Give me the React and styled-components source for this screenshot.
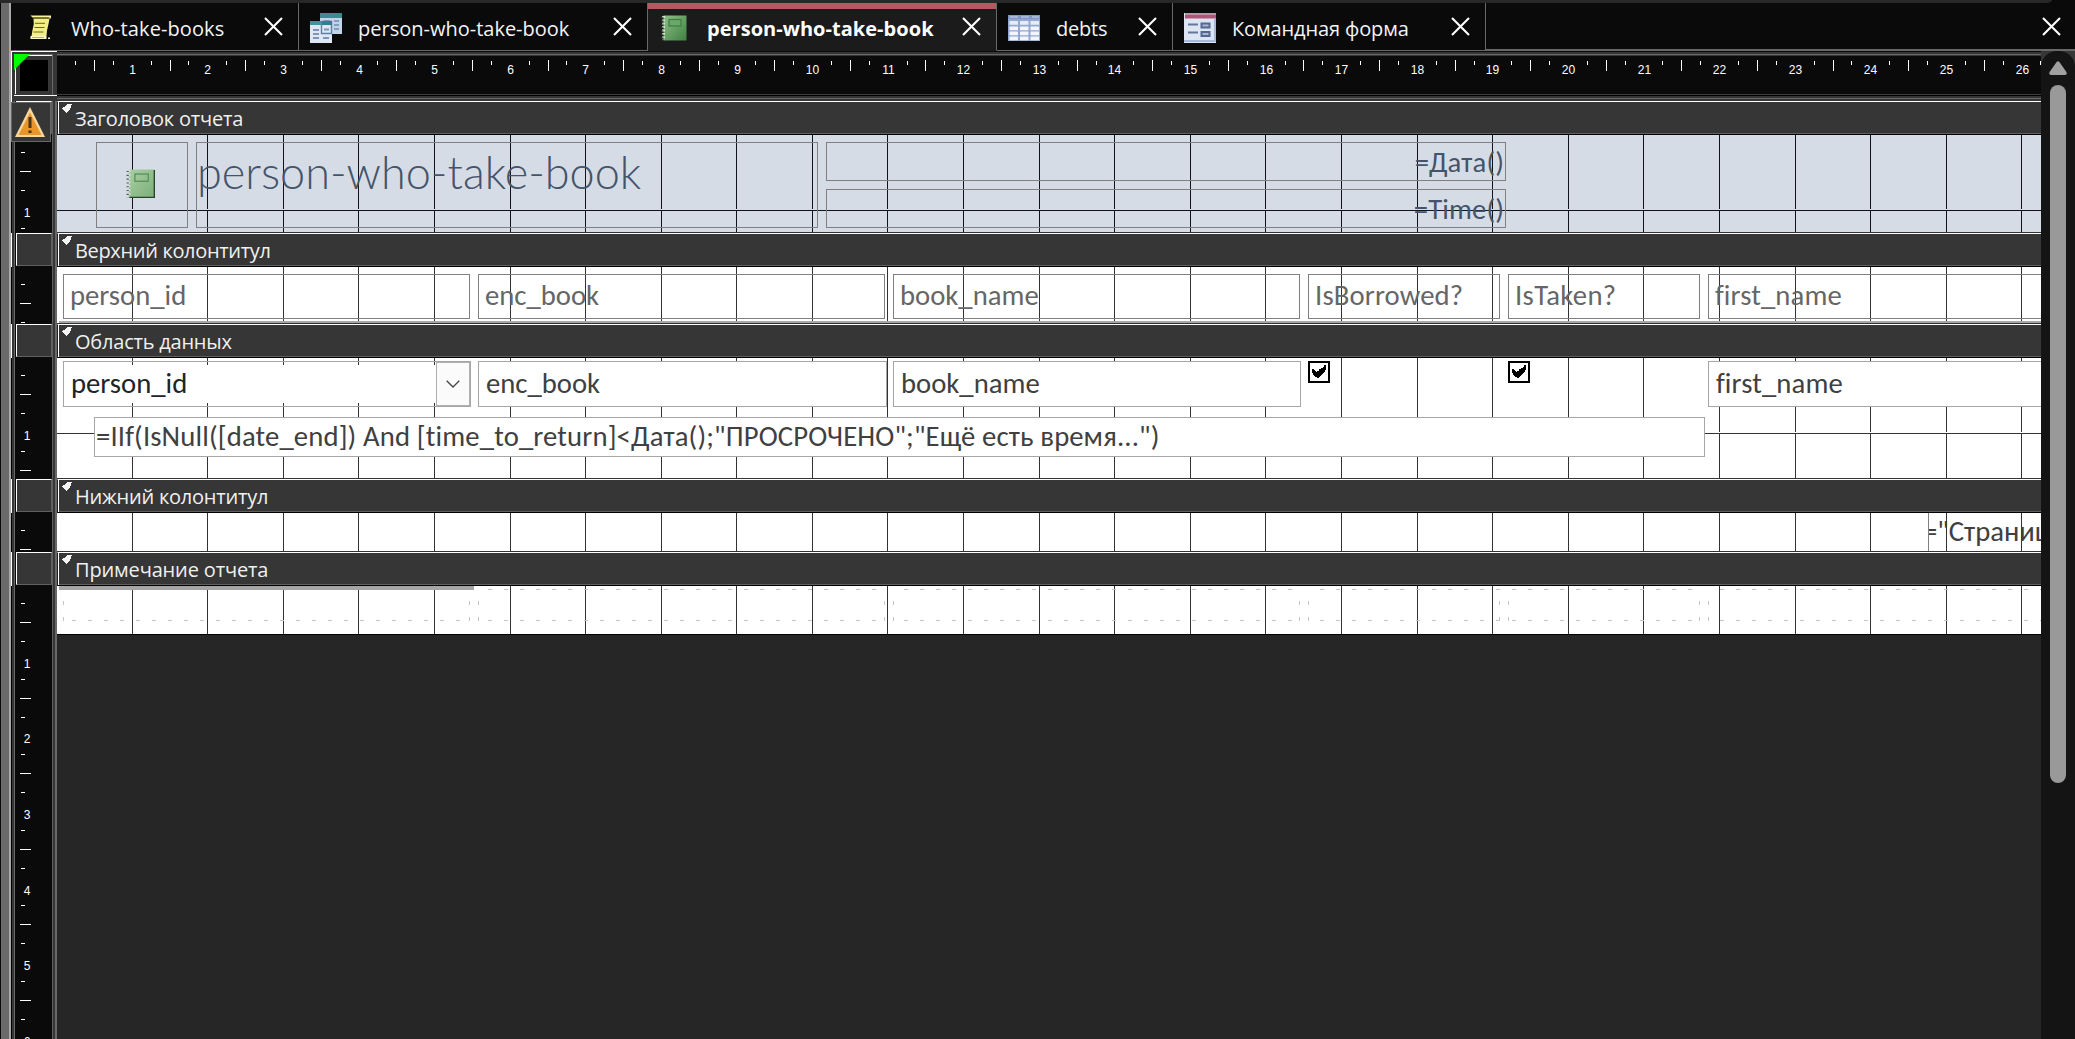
import React from "react";
import styled, { createGlobalStyle, css } from "styled-components";

const CM = 75.59;
const GRID_START = -0.53;
const CANVAS_WIDTH = 1984;

const ui = `"Segoe UI", "Open Sans", "Noto Sans", sans-serif`;
const body = `Calibri, Carlito, Lato, sans-serif`;

const GlobalStyle = createGlobalStyle`
  * { box-sizing: border-box; }
  body { margin: 0; background: #0a0a0a; overflow: hidden; font-variant-ligatures: none; }
`;

/* ---------- window frame ---------- */

const Window = styled.div`
  width: 2075px;
  height: 1039px;
  display: flex;
  flex-direction: column;
  background: #0a0a0a;
  font-family: ${ui};
  overflow: hidden;
`;

const TopStrip = styled.div`
  flex: 0 0 3px;
  width: 2052px;
  background: #282828;
  border-bottom-right-radius: 6px 3px;
`;

const Frame = styled.div`
  flex: 1;
  min-height: 0;
  display: flex;
`;

const LeftEdge = styled.div`
  flex: 0 0 11px;
  background: linear-gradient(90deg, #0a0a0a 1px, #6a6a6a 1px 9px, #a9a9a9 9px);
`;

const Main = styled.div`
  flex: 1;
  min-width: 0;
  display: flex;
  flex-direction: column;
`;

/* ---------- document tabs ---------- */

const TabBar = styled.div`
  flex: 0 0 48px;
  display: flex;
`;

const Tab = styled.div`
  width: ${(p) => p.$width}px;
  display: flex;
  align-items: center;
  padding: 3px 13px 0 ${(p) => p.$pad}px;
  border-right: 1px solid #686868;
  border-bottom: 1px solid #686868;
  color: #f4f4f4;
  font-size: 20px;
  white-space: nowrap;
  ${(p) =>
    p.$active &&
    css`
      background: #1b1b1b;
      border-bottom-color: #1b1b1b;
      box-shadow: inset 0 6px 0 #b65862;
      font-weight: 700;
      color: #fff;
    `}
`;

const TabIcon = styled.span`
  display: flex;
  flex: 0 0 32px;
  margin-right: ${(p) => p.$gap}px;
  margin-top: -1px;
`;

const TabLabel = styled.span`
  flex: 1;
  line-height: 27px;
  letter-spacing: ${(p) => p.$tracking || 0}px;
`;

const CloseButton = styled.button`
  width: 24px;
  height: 24px;
  padding: 0;
  margin-top: -3px;
  border: 0;
  background: none;
  color: #fff;
  display: grid;
  place-items: center;
`;

const TabBarRest = styled.div`
  flex: 1;
  display: flex;
  align-items: center;
  justify-content: flex-end;
  padding: 3px 12px 0 0;
  border-bottom: 2px solid #686868;
`;

/* ---------- designer ---------- */

const Workspace = styled.div`
  flex: 1;
  min-height: 0;
  display: flex;
`;

const Designer = styled.div`
  flex: 0 0 2030px;
  display: flex;
  flex-direction: column;
  overflow: hidden;
`;

const RulerRow = styled.div`
  flex: 0 0 50px;
  display: flex;
`;

const Corner = styled.div`
  flex: 0 0 46px;
  display: flex;
  flex-direction: column;
  border-top: 1px solid #fff;
  border-left: 1px solid #fff;
  padding: 2px 0 0 2px;
  background: #363636;
`;

const CornerButton = styled.div`
  width: 39px;
  height: 41px;
  border-top: 1px solid #686868;
  border-right: 1px solid #686868;
  position: relative;
  padding: 0 0 0 1px;
`;

const CornerInner = styled.div`
  width: 37px;
  height: 39px;
  border-top: 1px solid #fff;
  border-left: 1px solid #fff;
  display: grid;
  place-items: center;
`;

const CornerSquare = styled.div`
  width: 28px;
  height: 31px;
  background: #000;
`;

const CornerFlag = styled.div`
  position: absolute;
  left: 0;
  top: -1px;
  width: 16px;
  height: 16px;
  background: #00ff00;
  clip-path: polygon(0 0, 100% 0, 0 100%);
`;

const CornerBase = styled.div`
  height: 1px;
  background: #fff;
`;

const HorizontalRuler = styled.div`
  flex: 1;
  padding-top: 5px;
  background: linear-gradient(
    180deg,
    #0a0a0a 1px,
    #363636 1px 3px,
    #686868 3px 4px,
    #363636 4px 5px,
    #0a0a0a 5px 43px,
    #3c3c3c 43px 44px,
    #000 44px 45px,
    #363636 45px 47px,
    #686868 47px 48px,
    #363636 48px
  );
`;

const RulerSvg = styled.svg`
  display: block;
  fill: #fff;
  font-family: "Liberation Sans", Arial, sans-serif;
  font-size: 12px;
`;

const Section = styled.section`
  display: flex;
  ${(p) =>
    p.$fill &&
    css`
      flex: 1;
      min-height: 0;
    `}
`;

const Gutter = styled.div`
  flex: 0 0 46px;
  display: flex;
  flex-direction: column;
  overflow: hidden;
  background: linear-gradient(
    90deg,
    #000 1px,
    #363636 1px 3px,
    #686868 3px 4px,
    #0a0a0a 4px 41px,
    #606060 41px 42px,
    #363636 42px 44px,
    #686868 44px
  );
`;

const SelectorRow = styled.div`
  flex: 0 0 34px;
  width: 42px;
  border-left: 1px solid #fff;
  padding-left: 4px;
  position: relative;
`;

const Selector = styled.div`
  width: 36px;
  height: 33px;
  background: #363636;
  border: 1px solid #fff;
  border-right-color: #606060;
  border-bottom-color: #606060;
`;

const WarningButton = styled.div`
  position: absolute;
  z-index: 2;
  left: -1px;
  top: 1px;
  width: 40px;
  height: 40px;
  border: 1px solid #686868;
  background: #363636;
  display: flex;
  align-items: center;
  padding-left: 2px;
`;

const SectionBody = styled.div`
  flex: 1;
  min-width: 0;
  display: flex;
  flex-direction: column;
  background: #262626;
`;

const SectionHeader = styled.div`
  flex: 0 0 34px;
  height: 34px;
  min-height: 0;
  display: flex;
  align-items: flex-start;
  background: #363636;
  border-top: 1px solid #fff;
  border-bottom: 1px solid #000;
  border-left: 1px solid #202020;
  box-shadow: inset 1px 0 0 #fff, inset 0 -1px 0 #606060;
  padding-left: 4px;
  color: #f0f0f0;
  font-size: 20px;
`;

const SectionTitle = styled.span`
  margin: 3px 0 0 2px;
  line-height: 28px;
  letter-spacing: ${(p) => p.$tracking}px;
`;

const Canvas = styled.div`
  position: relative;
  flex: 0 0 ${(p) => p.$height}px;
  overflow: hidden;
  background: ${(p) => p.$fill || "#fff"};
  border-bottom: 1px solid ${(p) => p.$edge || "#333"};
`;

const GridSvg = styled.svg`
  display: block;
  position: absolute;
  inset: 0;
`;

/* ---------- report controls placed freely on the canvas ---------- */

const Control = styled.div`
  position: absolute;
  left: ${(p) => p.$x}px;
  top: ${(p) => p.$y}px;
  width: ${(p) => p.$w}px;
  height: ${(p) => p.$h}px;
  border: 1px solid #808080;
  font-family: ${body};
  font-size: 28.7px;
  letter-spacing: ${(p) => p.$tracking || 0}px;
  white-space: nowrap;
`;

const PictureBox = styled(Control)`
  display: flex;
  padding: 26px 0 0 29px;
`;

const TitleLabel = styled(Control)`
  font-family: Lato, sans-serif;
  font-weight: 300;
  font-size: 45px;
  line-height: 58px;
  color: #44546a;
`;

const HeaderField = styled(Control)`
  text-align: right;
  line-height: 39px;
  color: #44546a;
  padding-right: 1px;
  letter-spacing: 0.1px;
`;

const ColumnLabel = styled(Control)`
  line-height: 42px;
  padding-left: 6px;
  color: #666;
`;

const BoundField = styled(Control)`
  line-height: 44px;
  padding-left: 7px;
  background: #fff;
  border-color: #a6a6a6;
  color: #404040;
`;

const ComboField = styled(BoundField)`
  display: flex;
  background: none;
  padding: 3px 0 2px;
  color: #202428;
`;

const ComboText = styled.div`
  flex: 1;
  height: 38px;
  margin-right: 1px;
  padding-left: 7px;
  line-height: 38px;
  background: #fff;
`;

const ComboButton = styled.div`
  width: 34px;
  height: 44px;
  margin-top: -3px;
  background: #fbfbfb;
  border: 1px solid #b0b0b0;
  display: grid;
  place-items: center;
`;

const ExpressionField = styled(BoundField)`
  line-height: 38px;
  padding-left: 1px;
`;

const PageField = styled(Control)`
  line-height: 38px;
  color: #404040;
  border-bottom: 0;
  overflow: hidden;
  text-indent: -6px;
`;

const Check = styled.div`
  position: absolute;
  left: ${(p) => p.$x}px;
  top: 3px;
  width: 22px;
  height: 22px;
  border: 2px solid #000;
  background: #fff;
`;

const Rule = styled.div`
  position: absolute;
  left: 2px;
  top: ${(p) => p.$y}px;
  width: ${(p) => p.$w}px;
  height: ${(p) => p.$h}px;
  background: #a5a5a5;
`;

/* ---------- scroll bar ---------- */

const ScrollWell = styled.div`
  flex: 1;
  background: #363636;
`;

const ScrollBar = styled.div`
  height: 100%;
  background: #141414;
  border-radius: 16px 16px 0 0;
  display: flex;
  flex-direction: column;
  align-items: center;
  padding-top: 10px;
`;

const ScrollThumb = styled.div`
  width: 16px;
  height: 698px;
  margin-top: 10px;
  border-radius: 8px;
  background: #999;
`;

/* ---------- drawings ---------- */

const Cross = () => (
  <svg width="19" height="19" viewBox="0 0 19 19" stroke="currentColor" strokeWidth="2.1" fill="none">
    <path d="M1 1 18 18M18 1 1 18" />
  </svg>
);

const QueryScriptIcon = () => (
  <svg width="22" height="25" viewBox="0 0 22 25">
    <path d="M3.500 3.500H19.500L18.500 9 17 15.500 16.500 21H1.500L2.500 15 3.800 9z" fill="#f4ef86" />
    <path d="M.5.5h20.500v2.500l-1.500 1V2.500H2.500z" fill="#f8f4a0" />
    <path d="M3 3.200h16M5 8.300h10M4.500 12.500h10M3.500 17h10" stroke="#6a6718" strokeWidth="1" fill="none" />
    <path d="M.5 21h16v3H.5zM18 22.500h2V24h-2z" fill="#fbf9c4" />
    <path d="M2 22.500h12" stroke="#b9b44a" strokeWidth="1" />
  </svg>
);

const FormsIcon = () => (
  <svg width="32" height="30" viewBox="0 0 32 30">
    <rect x="10" y="0" width="22" height="21" fill="#c3d4e8" />
    <rect x="10" y="0" width="22" height="5" fill="#3f8a90" />
    <path d="M14 8h6M24 8h5M24 12h5M24 16h5" stroke="#6c8fb0" strokeWidth="1.6" />
    <rect x="0" y="8" width="22" height="22" fill="#dfe7f3" />
    <rect x="0" y="8" width="12" height="4" fill="#3f979c" />
    <path d="M3 17h6M13 25h6M3 21h6M3 25h6" stroke="#7c96ba" strokeWidth="2" />
    <path d="M11.500 8.500h10v12h-10z" fill="#dce6f2" stroke="#5d7fa8" strokeWidth="1.4" />
    <path d="M12 8h10v4H12z" fill="#2f7f92" />
    <path d="M14 16.500h5" stroke="#7c96ba" strokeWidth="2" />
  </svg>
);

const NotebookIcon = ({ size = 26, dark }) => (
  <svg width={size} height={size} viewBox="0 0 26 26">
    <defs>
      <linearGradient id={dark ? "nbA" : "nbB"} x1="0" y1="0" x2="1" y2="1">
        <stop offset="0" stopColor={dark ? "#8fc08a" : "#a9d0a4"} />
        <stop offset="1" stopColor={dark ? "#3f8040" : "#7cae78"} />
      </linearGradient>
    </defs>
    <rect x="2.5" y="0.5" width="23" height="25" fill={`url(#${dark ? "nbA" : "nbB"})`} />
    {!dark && <path d="M25.5 1v24.5H3" fill="none" stroke="#274527" strokeWidth="1.4" />}
    <rect x="8" y="4.500" width="12" height="6.5" fill={dark ? "#6aa868" : "none"} stroke={dark ? "#3d7d42" : "#5b9060"} strokeWidth="1.2" />
    <path d="M2.5 1v24" stroke={dark ? "#d8e8d6" : "#d6dce5"} strokeWidth="3" strokeDasharray="1.8 1.6" />
    <path d="M1.5 1.8v24" stroke="#4c5a4c" strokeWidth="2" strokeDasharray="1 2.4" />
  </svg>
);

const TableIcon = () => (
  <svg width="32" height="26" viewBox="0 0 32 26">
    <rect width="32" height="26" fill="#93a9d0" />
    <rect width="32" height="4" fill="#7f96c6" />
    <path d="M2 2h8M13 2h8M24 2h7" stroke="#b4c2e0" strokeWidth="1.4" />
    {[6, 11.5, 16.5, 21.5].map((y, r) =>
      [1.5, 12, 22.5].map((x) => (
        <rect key={`${x}-${y}`} x={x} y={y} width="8.5" height="3.8" rx="0.6" fill={r === 0 ? "#e6ebf5" : "#f2f5fb"} />
      ))
    )}
  </svg>
);

const CommandFormIcon = () => (
  <svg width="32" height="30" viewBox="0 0 32 30">
    <rect width="32" height="30" fill="#dde5f3" />
    <path d="M0 29h32V6h-2v21H0z" fill="#a6b8dc" />
    <rect x="1" width="31" height="5.5" fill="#b25478" />
    <rect x="1" width="31" height="2" fill="#cf8ba4" />
    <path d="M4 11.5h10M4 19.5h10" stroke="#66779b" strokeWidth="2" />
    <rect x="17.5" y="10.5" width="8" height="4" fill="#a9b7d2" stroke="#56688f" strokeWidth="2" />
    <rect x="17.5" y="19" width="8" height="4" fill="#a9b7d2" stroke="#56688f" strokeWidth="2" />
  </svg>
);

const WarningIcon = () => (
  <svg width="32" height="32" viewBox="0 0 32 32">
    <path d="M16 1 31 31H1z" fill="#f8d79a" />
    <path d="M16 6.5 27.500 29h-23z" fill="#e8952c" />
    <path d="M14.500 11h3v11h-3zM14.500 24.500h3v2.500h-3z" fill="#4a3414" />
  </svg>
);

const ArrowSvg = styled.svg`
  margin-top: 2px;
`;

const SectionArrow = () => (
  <ArrowSvg width="11" height="9" viewBox="0 0 11 9" shapeRendering="crispEdges">
    <path d="M5 0h5v1H9v3h-1v2H7v1H6v1H5v1H4V8H3V7H2V6H1V5H0V4h1V3h2V2h1V1h1z" fill="#f4f4f4" />
  </ArrowSvg>
);

const CheckMark = () => (
  <svg width="18" height="18" viewBox="0 0 18 18" shapeRendering="crispEdges">
    <path d="M2 6h2v1h1v1h1v1h1V8h2V6h2V5h2V4h1V2h2v5h-1v2h-1v1h-1v1h-1v1h-1v1h-1v1h-1v1H7v-1H5v-1H4v-1H3v-2H2z" fill="#000" />
  </svg>
);

const Chevron = () => (
  <svg width="14" height="8" viewBox="0 0 14 8" fill="none" stroke="#444" strokeWidth="1.3">
    <path d="M.7.8 7 7 13.300.8" />
  </svg>
);

const ScrollArrow = () => (
  <svg width="18" height="14" viewBox="0 0 18 14">
    <path d="M7.600.9Q9-.6 10.400.9L17.400 11Q18.500 13.900 16 14H2Q-.5 13.900.6 11z" fill="#a0a0a0" />
  </svg>
);

/* ---------- rulers and grid ---------- */

const quarters = (from, to) => Array.from({ length: to - from + 1 }, (_, i) => from + i);

const TopRuler = () => (
  <RulerSvg width={CANVAS_WIDTH} height="38">
    {quarters(1, 105).map((q) => {
      const x = Math.round((q * CM) / 4 - 0.8);
      if (q % 4 === 0) {
        return (
          <text key={q} x={x + 0.5} y="18" textAnchor="middle">
            {q / 4}
          </text>
        );
      }
      return <rect key={q} x={x} y={q % 2 ? 5 : 4} width="1" height={q % 2 ? 4 : 11} />;
    })}
  </RulerSvg>
);

const SideRuler = ({ height }) => (
  <RulerSvg width="41" height={height}>
    {quarters(1, Math.floor((height + 14) / (CM / 4))).map((q) => {
      if (q % 4 === 0) {
        return (
          <text key={q} x="16" y={Math.round((q * CM) / 4 + 6.2)} textAnchor="middle">
            {q / 4}
          </text>
        );
      }
      const y = Math.floor((q * CM) / 4 - 1.28);
      return <rect key={q} x={q % 2 ? 10 : 9} y={y} width={q % 2 ? 4 : 11} height="1" />;
    })}
  </RulerSvg>
);

const DesignGrid = ({ height, color = "#333", paper = "#fff" }) => (
  <GridSvg width={CANVAS_WIDTH} height={height} shapeRendering="crispEdges">
    {height > 75 && <rect x="0" y="75" width={CANVAS_WIDTH} height="1" fill={color} />}
    {quarters(1, 26).map((n) => {
      const x = Math.floor(GRID_START + n * CM);
      return (
        <g key={n}>
          <rect x={x} y="0" width="1" height={height} fill={color} />
          {height > 75 && <rect x={x} y="74" width="1" height="1" fill={paper} />}
        </g>
      );
    })}
  </GridSvg>
);

const EMPTY_CELLS = [
  [6, 412],
  [421, 827],
  [836, 1242],
  [1251, 1442],
  [1451, 1642],
  [1651, 2100],
];

const EmptyCells = () => (
  <GridSvg width={CANVAS_WIDTH} height="48" fill="#c4c4c4" shapeRendering="crispEdges">
    {EMPTY_CELLS.map(([l, r]) => (
      <g key={l}>
        {quarters(0, 124)
          .map((k) => 15 + k * 16)
          .filter((x) => x > l && x < r)
          .map((x) => (
            <g key={x}>
              <rect x={x} y="3" width="4" height="1" />
              <rect x={x} y="34" width="4" height="1" />
            </g>
          ))}
        {[l, r].map((x) => (
          <g key={x}>
            <rect x={x} y="15" width="1" height="4" />
            <rect x={x} y="31" width="1" height="4" />
          </g>
        ))}
      </g>
    ))}
  </GridSvg>
);

/* ---------- composition ---------- */

const DesignSection = ({ title, tracking = 0, height, fill, gridColor, edge, warning, last, children }) => (
  <Section $fill={last}>
    <Gutter>
      <SelectorRow>
        <Selector />
        {warning && (
          <WarningButton>
            <WarningIcon />
          </WarningButton>
        )}
      </SelectorRow>
      <SideRuler height={last ? 453 : height} />
    </Gutter>
    <SectionBody>
      <SectionHeader>
        <SectionArrow />
        <SectionTitle $tracking={tracking}>{title}</SectionTitle>
      </SectionHeader>
      <Canvas $height={height} $fill={fill} $edge={edge}>
        <DesignGrid height={height} color={gridColor} paper={fill} />
        {children}
      </Canvas>
    </SectionBody>
  </Section>
);

const TABS = [
  { label: "Who-take-books", width: 288, pad: 19, gap: 9, icon: <QueryScriptIcon />, tracking: 0.1 },
  { label: "person-who-take-book", width: 349, pad: 11, gap: 16, icon: <FormsIcon /> },
  { label: "person-who-take-book", width: 349, pad: 13, gap: 14, icon: <NotebookIcon dark />, active: true, tracking: 0.04 },
  { label: "debts", width: 176, pad: 11, gap: 16, icon: <TableIcon />, tracking: -0.2 },
  { label: "Командная форма", width: 313, pad: 11, gap: 16, icon: <CommandFormIcon />, tracking: -0.12 },
];

export default function App() {
  return (
    <Window>
      <GlobalStyle />
      <TopStrip />
      <Frame>
        <LeftEdge />
        <Main>
          <TabBar>
            {TABS.map((t, i) => (
              <Tab key={i} $width={t.width} $pad={t.pad} $active={t.active}>
                <TabIcon $gap={t.gap}>{t.icon}</TabIcon>
                <TabLabel $tracking={t.tracking}>{t.label}</TabLabel>
                <CloseButton>
                  <Cross />
                </CloseButton>
              </Tab>
            ))}
            <TabBarRest>
              <CloseButton>
                <Cross />
              </CloseButton>
            </TabBarRest>
          </TabBar>
          <Workspace>
            <Designer>
              <RulerRow>
                <Corner>
                  <CornerButton>
                    <CornerInner>
                      <CornerSquare />
                    </CornerInner>
                    <CornerFlag />
                  </CornerButton>
                  <CornerBase />
                </Corner>
                <HorizontalRuler>
                  <TopRuler />
                </HorizontalRuler>
              </RulerRow>

              <DesignSection title="Заголовок отчета" tracking={-0.2} height={98} fill="#d6dce5" gridColor="#10131c" warning>
                <PictureBox $x={39} $y={7} $w={92} $h={86}>
                  <NotebookIcon size={29} />
                </PictureBox>
                <TitleLabel $x={139} $y={7} $w={622} $h={86}>
                  person-who-take-book
                </TitleLabel>
                <HeaderField $x={769} $y={7} $w={680} $h={39}>
                  =Дата()
                </HeaderField>
                <HeaderField $x={769} $y={54} $w={680} $h={39}>
                  =Time()
                </HeaderField>
              </DesignSection>

              <DesignSection title="Верхний колонтитул" tracking={-0.34} height={57}>
                <ColumnLabel $x={6} $y={7} $w={407} $h={45}>person_id</ColumnLabel>
                <ColumnLabel $x={421} $y={7} $w={407} $h={45}>enc_book</ColumnLabel>
                <ColumnLabel $x={836} $y={7} $w={407} $h={45}>book_name</ColumnLabel>
                <ColumnLabel $x={1251} $y={7} $w={192} $h={45} $tracking={0.15}>IsBorrowed?</ColumnLabel>
                <ColumnLabel $x={1451} $y={7} $w={192} $h={45} $tracking={0.35}>IsTaken?</ColumnLabel>
                <ColumnLabel $x={1651} $y={7} $w={400} $h={45} $tracking={0.12}>first_name</ColumnLabel>
                <Rule $y={54} $w={1982} $h={2} />
              </DesignSection>

              <DesignSection title="Область данных" tracking={-0.22} height={121}>
                <ComboField $x={6} $y={3} $w={408} $h={46}>
                  <ComboText>person_id</ComboText>
                  <ComboButton>
                    <Chevron />
                  </ComboButton>
                </ComboField>
                <BoundField $x={421} $y={3} $w={409} $h={46}>enc_book</BoundField>
                <BoundField $x={836} $y={3} $w={408} $h={46}>book_name</BoundField>
                <Check $x={1251}>
                  <CheckMark />
                </Check>
                <Check $x={1451}>
                  <CheckMark />
                </Check>
                <BoundField $x={1651} $y={3} $w={400} $h={46} $tracking={0.12}>first_name</BoundField>
                <ExpressionField $x={37} $y={59} $w={1611} $h={40} $tracking={0.14}>
                  {'=IIf(IsNull([date_end]) And [time_to_return]<Дата();"ПРОСРОЧЕНО";"Ещё есть время...")'}
                </ExpressionField>
              </DesignSection>

              <DesignSection title="Нижний колонтитул" tracking={-0.22} height={39}>
                <PageField $x={1871} $y={-1} $w={300} $h={39}>{'="Страница "'}</PageField>
              </DesignSection>

              <DesignSection title="Примечание отчета" tracking={-0.15} height={49} edge="#000" last>
                <EmptyCells />
                <Rule $y={-1} $w={415} $h={5} />
              </DesignSection>
            </Designer>
            <ScrollWell>
              <ScrollBar>
                <ScrollArrow />
                <ScrollThumb />
              </ScrollBar>
            </ScrollWell>
          </Workspace>
        </Main>
      </Frame>
    </Window>
  );
}
